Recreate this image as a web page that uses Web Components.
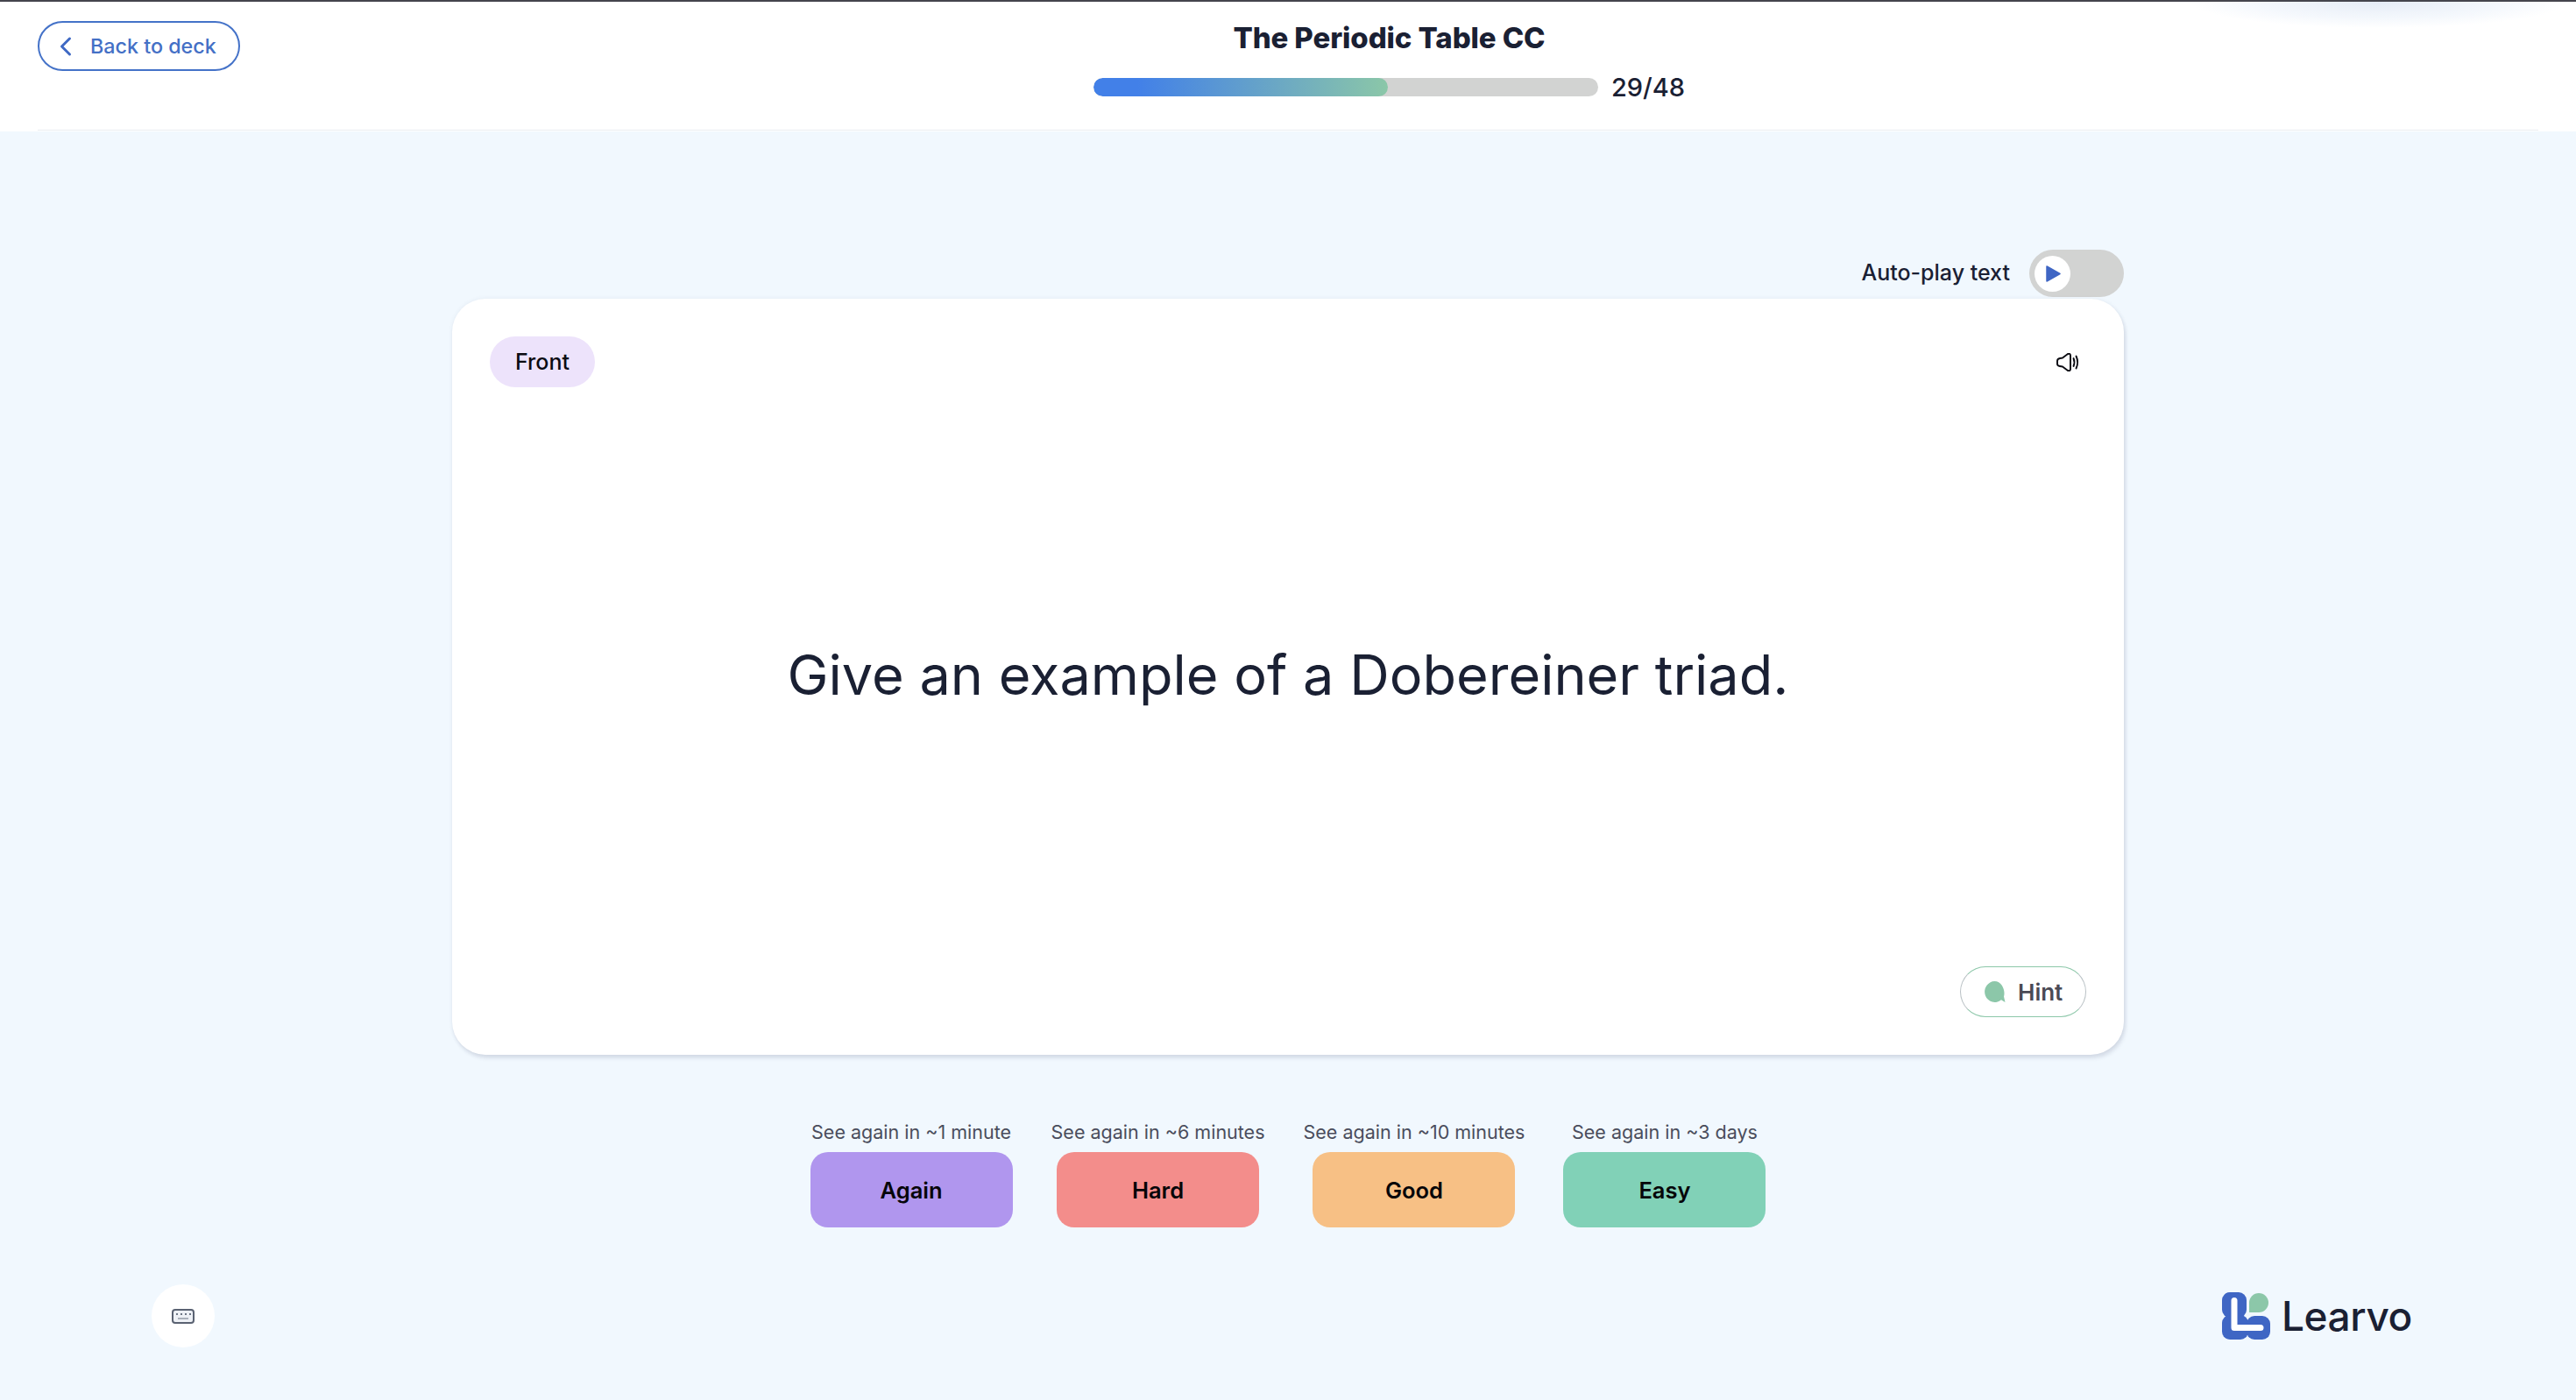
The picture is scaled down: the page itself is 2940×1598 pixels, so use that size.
<!DOCTYPE html>
<html lang="en"><head><meta charset="utf-8"><title>The Periodic Table CC</title>
<style>
html,body{margin:0;padding:0;height:100%}
body{background:#f1f8fe;font-family:Inter,"Liberation Sans",sans-serif;color:#1a2033;width:2940px;height:1598px;overflow:hidden}
</style></head><body>
<study-page>
  <study-header slot="header" deck="The Periodic Table CC" done="29" total="48"></study-header>
  <autoplay-toggle slot="toggle">Auto-play text</autoplay-toggle>
  <flash-card slot="card" side="Front">Give an example of a Dobereiner triad.</flash-card>
  <answer-choice slot="answers" hint="See again in ~1 minute" color="#b096ee">Again</answer-choice>
  <answer-choice slot="answers" hint="See again in ~6 minutes" color="#f38d8b">Hard</answer-choice>
  <answer-choice slot="answers" hint="See again in ~10 minutes" color="#f7c085">Good</answer-choice>
  <answer-choice slot="answers" hint="See again in ~3 days" color="#81d1b7">Easy</answer-choice>
  <keyboard-button slot="kbd"></keyboard-button>
  <learvo-logo slot="logo"></learvo-logo>
</study-page>
<script>
function def(name, html){
  customElements.define(name, class extends HTMLElement{
    constructor(){super();this.attachShadow({mode:'open'});}
    connectedCallback(){
      const a=n=>this.getAttribute(n)||'';
      this.shadowRoot.innerHTML = typeof html==='function'?html(a):html;
    }
  });
}
def('study-page',`<style>
:host{display:flex;flex-direction:column;height:1598px;box-sizing:border-box}
main{display:flex;flex-direction:column;align-items:center;padding-top:135px}
.tog{width:1908px;display:flex;justify-content:flex-end;margin-bottom:2px}
.answers{display:flex;gap:44px;margin-top:74px}
footer{display:flex;justify-content:space-between;align-items:center;margin-top:65px;padding:0 187px 0 173px}
</style>
<slot name="header"></slot>
<main><div class="tog"><slot name="toggle"></slot></div><slot name="card"></slot>
<div class="answers"><slot name="answers"></slot></div></main>
<footer><slot name="kbd"></slot><slot name="logo"></slot></footer>`);

def('study-header',a=>`<style>
:host{display:block;height:150px;box-sizing:border-box;background:#fff;border-top:2px solid #45454d;padding:0 43px 0 43px;position:relative}
.glow{position:absolute;left:2500px;top:0;width:430px;height:30px;background:radial-gradient(ellipse 50% 100% at 50% 0,rgba(205,218,238,.5),rgba(225,235,248,.35) 65%,transparent 100%)}
.in{height:147px;box-sizing:border-box;border-bottom:1px solid #e9edf2;display:grid;grid-template-columns:231px 1fr;width:2854px}
.back{margin-top:22px;width:231px;height:57px;box-sizing:border-box;border:2px solid #4472c8;border-radius:29px;display:flex;align-items:center;padding-left:22px;gap:21px;color:#4470c6;font-size:23.300px;font-weight:500}
.c{display:flex;flex-direction:column;align-items:center}
h1{margin:21px 0 0;font:800 33px/41px Inter,"Liberation Sans",sans-serif;color:#1a2033;letter-spacing:-.1px}
.p{display:flex;align-items:center;gap:15px;margin-top:24px;height:22px}
.bar{width:576px;height:21px;border-radius:11px;background:#d2d3d2;overflow:hidden}
.fill{width:336px;height:100%;border-radius:11px;background:linear-gradient(90deg,#4280e8 0%,#4280e8 15%,#8bc7a8 100%)}
.n{font-size:29px;font-weight:500;color:#1a2033}
</style><div class="glow"></div><div class="in">
<div class="back"><svg width="15" height="24" viewBox="0 0 15 24"><path d="M12.500 3 3.500 12l9 9" fill="none" stroke="#3f69c4" stroke-width="3" stroke-linecap="round" stroke-linejoin="round"/></svg><span>Back to deck</span></div>
<div class="c"><h1>${a('deck')}</h1><div class="p"><div class="bar"><div class="fill"></div></div><span class="n">${a('done')}/${a('total')}</span></div></div>
</div>`);

def('autoplay-toggle',`<style>
:host{display:flex;align-items:center;gap:22px;font-size:25px;line-height:30px;font-weight:500;color:#1a2033}
.t{position:relative;top:-1px}
.sw{width:108px;height:54px;border-radius:27px;background:#d2d3d2;display:flex;align-items:center;padding-left:6px;box-sizing:border-box}
.k{width:41px;height:41px;border-radius:50%;background:#fff;display:flex;align-items:center;justify-content:center}
</style><span class="t"><slot></slot></span><div class="sw"><div class="k"><svg width="17" height="19" viewBox="0 0 17 19" style="margin-left:2px"><path d="M1 1 16 9.500 1 18Z" fill="#3f66c4" stroke="#3f66c4" stroke-width="1.500" stroke-linejoin="round"/></svg></div></div>`);

def('flash-card',a=>`<style>
:host{width:1908px;height:863px;box-sizing:border-box;background:#fff;border-radius:38px;box-shadow:2px 4px 4px rgba(70,80,110,.14),0 0 5px rgba(70,80,110,.08);display:flex;flex-direction:column}
.top{display:flex;justify-content:space-between;align-items:center;padding:43px 50px 0 43px}
.pill{width:120px;height:58px;border-radius:29px;background:#ede3fb;display:flex;align-items:center;justify-content:center;font-size:25px;font-weight:500;color:#0b0b12}
.q{flex:1;display:flex;align-items:center;justify-content:center;font-size:63px;line-height:80px;color:#1a2033;padding-bottom:6px}
.bot{display:flex;justify-content:flex-end;padding:0 43px 43px 0}
.hint{width:144px;height:58px;box-sizing:border-box;border:1.500px solid;border-color:#8cc7a9 #b8c0c4 #8cc7a9 #b8c0c4;border-radius:29px;display:flex;align-items:center;gap:14px;padding-left:27px;font-size:26px;font-weight:600;color:#4a4a55}
</style>
<div class="top"><div class="pill">${a('side')}</div>
<svg width="27" height="21" viewBox="0 0 27 21"><path d="M1 9Q1 6.500 4 6L7 5.500 13 1Q16 0 16 3V18Q16 21 13 20L7 15.500 4 15Q1 14.500 1 12.500Z" fill="none" stroke="#0b0b12" stroke-width="1.900" stroke-linejoin="round"/><path d="M19.500 6Q21.500 10.500 19.500 15M22.500 3.500Q25.800 10.500 22.500 17.500" fill="none" stroke="#0b0b12" stroke-width="1.900" stroke-linecap="round"/></svg></div>
<div class="q"><slot></slot></div>
<div class="bot"><div class="hint"><svg width="24" height="25" viewBox="0 0 24 25"><path d="M11.500 0A11.500 12 0 1 0 19 21.200L23.500 24 22 17.500C24 11 20 0 11.500 0Z" fill="#8cc7a9"/></svg><span>Hint</span></div></div>`);

def('answer-choice',a=>`<style>
:host{display:flex;flex-direction:column;align-items:center;min-width:231px}
.h{font-size:21.500px;line-height:29px;margin-bottom:8px;color:#4a4d5c;white-space:nowrap}
.b{width:231px;height:86px;border-radius:20px;background:${a('color')};display:flex;align-items:center;justify-content:center;font-size:25.500px;font-weight:600;color:#060609}
</style><div class="h">${a('hint')}</div><div class="b"><slot></slot></div>`);

def('keyboard-button',`<style>
:host{display:flex;width:72px;height:72px;border-radius:50%;background:#fff;align-items:center;justify-content:center}
</style><svg width="26" height="17" viewBox="0 0 26 17"><rect x="1" y="1" width="24" height="15" rx="3" fill="#eef1f6" stroke="#5a6272" stroke-width="2"/><g fill="#6d7584"><rect x="5" y="5" width="2" height="2"/><rect x="10" y="5" width="2" height="2"/><rect x="15" y="5" width="2" height="2"/><rect x="20" y="5" width="2" height="2"/></g><rect x="7" y="10" width="12" height="2" fill="#aab0bb"/></svg>`);

def('learvo-logo',`<style>
:host{display:flex;align-items:center;gap:13px}
span{font-size:46px;font-weight:500;color:#1a2033;letter-spacing:-.4px;line-height:54px}
</style><svg width="55" height="54" viewBox="0 0 55 54"><g fill="#3f66c4"><rect x="0" y="0" width="28" height="29" rx="9"/><rect x="0" y="26" width="30" height="28" rx="9"/><rect x="28" y="27" width="27" height="27" rx="9"/></g><path d="M14 9.500V40.500H44" fill="none" stroke="#fff" stroke-width="7" stroke-linecap="round" stroke-linejoin="round"/><path d="M31 23V12A11 11 0 0 1 53 12A11 11 0 0 1 42 23Z" fill="#8cc7a9"/></svg><span>Learvo</span>`);
</script>
</body></html>
